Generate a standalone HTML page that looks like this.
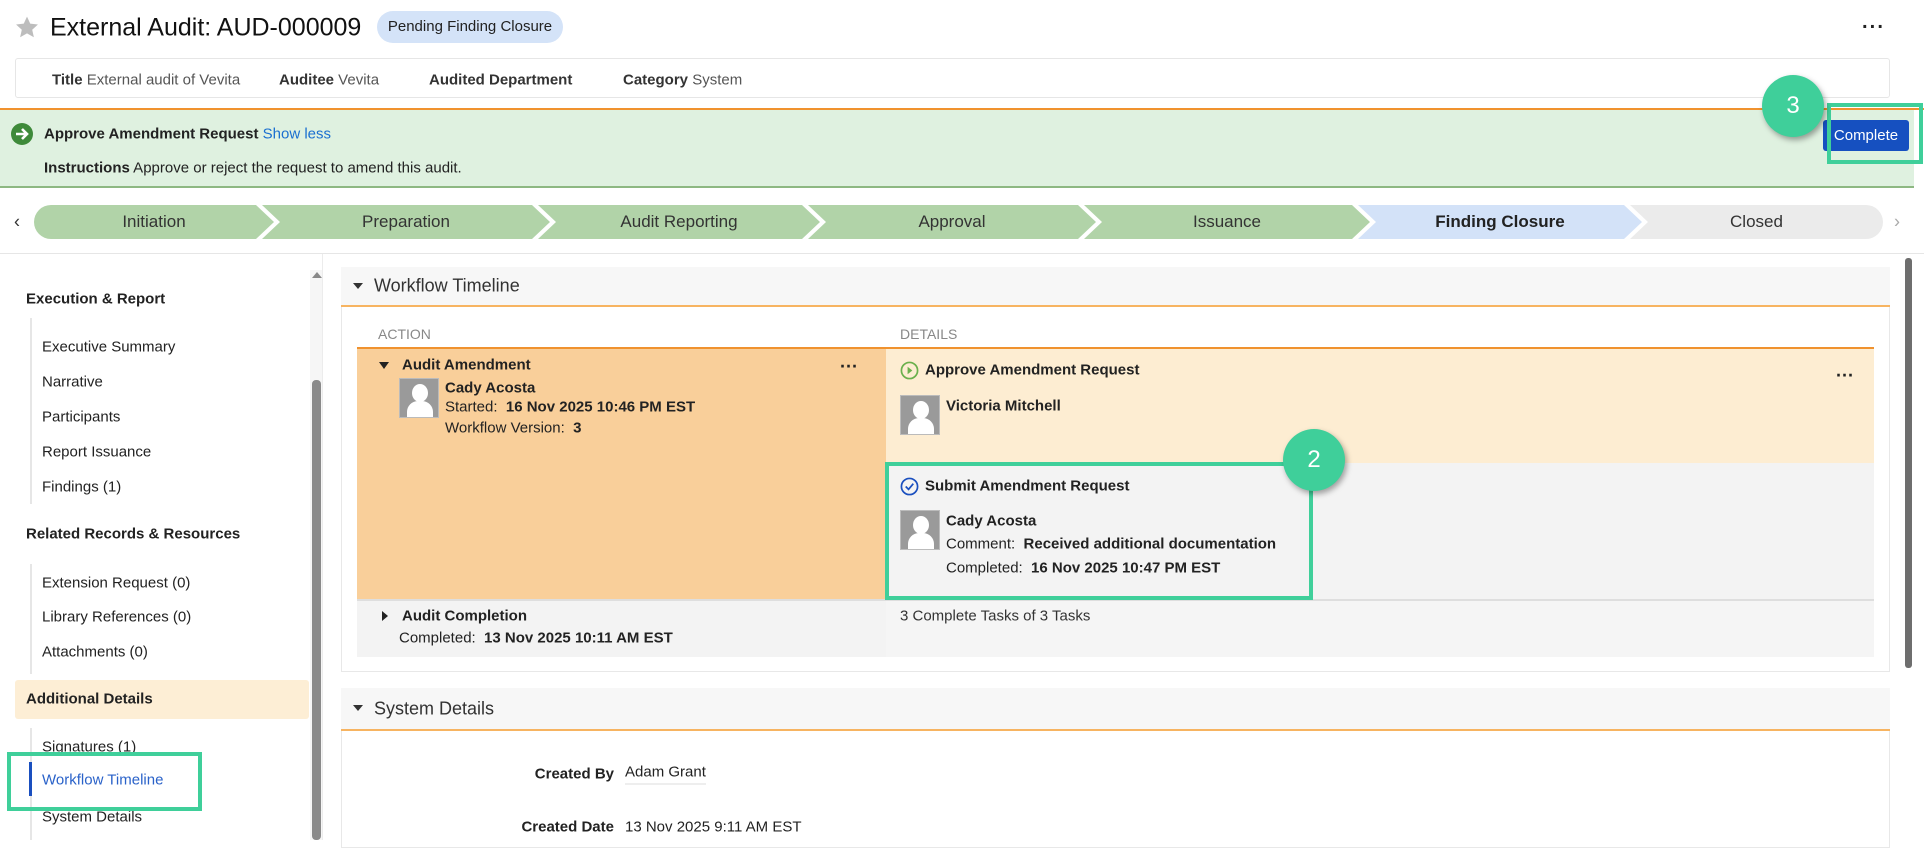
<!DOCTYPE html>
<html><head><meta charset="utf-8"><style>
*{margin:0;padding:0;box-sizing:border-box}
body{width:1924px;height:840px;overflow:hidden;background:#fff;font-family:"Liberation Sans",Arial,sans-serif;color:#222;position:relative;font-size:15px}
.a{position:absolute;white-space:nowrap}
.t{transform:translateY(-50%)}
b{font-weight:bold}
.step{position:absolute;top:205px;height:34px;display:flex;align-items:center;justify-content:center;font-size:17px;color:#333}
.av{position:absolute;width:40px;height:40px;background:#9a9a9a;border:1px solid #bbb;overflow:hidden}
.av:before{content:"";position:absolute;left:12px;top:5px;width:16px;height:18px;border-radius:50%;background:#fff}
.av:after{content:"";position:absolute;left:7px;top:22px;width:26px;height:22px;border-radius:11px 11px 0 0;background:#fff}
.hl{position:absolute;border:4px solid #3fcf9a}
.circ{position:absolute;width:62px;height:62px;border-radius:50%;background:#3fcf9a;color:#fff;font-size:24px;display:flex;align-items:center;justify-content:center;box-shadow:2px 3px 6px rgba(0,0,0,.35)}
.side{position:absolute;left:42px;font-size:15px;color:#222}
.sh{position:absolute;left:26px;font-size:15px;font-weight:bold}
</style></head><body>
<svg class="a" style="left:14px;top:15px" width="26" height="25" viewBox="0 0 24 24"><path d="M12 1.5l3.1 6.8 7.4.8-5.5 5 1.6 7.3L12 17.6l-6.6 3.8L7 14.1 1.5 9.1l7.4-.8z" fill="#bdbdbd"/></svg>
<div class="a t" style="left:50px;top:28px;font-size:25px;color:#111">External Audit: AUD-000009</div>
<div class="a" style="left:377px;top:11px;width:186px;height:32px;border-radius:16px;background:#d4e3f8;font-size:15px;line-height:32px;text-align:center;color:#222">Pending Finding Closure</div>
<div class="a t" style="left:1862px;top:28px;font-size:20px;font-weight:bold;letter-spacing:1px">···</div>
<div class="a" style="left:15px;top:58px;width:1875px;height:40px;border:1px solid #e6e6e6;border-radius:3px"></div>
<div class="a t" style="left:52px;top:80px;color:#555"><b style="color:#333">Title</b> External audit of Vevita</div>
<div class="a t" style="left:279px;top:80px;color:#555"><b style="color:#333">Auditee</b> Vevita</div>
<div class="a t" style="left:429px;top:80px"><b style="color:#333">Audited Department</b></div>
<div class="a t" style="left:623px;top:80px;color:#555"><b style="color:#333">Category</b> System</div>
<div class="a" style="left:0;top:108px;width:1924px;height:2px;background:#f0922e"></div>
<div class="a" style="left:0;top:110px;width:1914px;height:78px;background:#dff1e0;border-bottom:2px solid #8db882"></div>
<svg class="a" style="left:10px;top:122px" width="24" height="24" viewBox="0 0 24 24"><circle cx="12" cy="12" r="11" fill="#3e8a3a"/><path d="M6 12h10M12 7l5 5-5 5" stroke="#fff" stroke-width="2.6" fill="none"/></svg>
<div class="a t" style="left:44px;top:134px;font-size:15px"><b>Approve Amendment Request</b> <span style="color:#1a6fd0">Show less</span></div>
<div class="a t" style="left:44px;top:168px;font-size:15px"><b>Instructions</b> Approve or reject the request to amend this audit.</div>
<div class="a" style="left:1823px;top:120px;width:86px;height:31px;background:#1650c0;border-radius:3px;color:#fff;font-size:15px;line-height:31px;text-align:center">Complete</div>
<div class="hl" style="left:1827px;top:103px;width:96px;height:61px"></div>
<div class="circ" style="left:1762px;top:75px">3</div>
<div class="a t" style="left:14px;top:222px;font-size:18px;color:#333">‹</div>
<div class="a t" style="left:1894px;top:222px;font-size:18px;color:#aaa">›</div>
<div class="step" style="left:34px;width:240px;background:#b1d3a8;border-radius:17px 0 0 17px;clip-path:polygon(0 0,222px 0,100% 50%,222px 100%,0 100%)">Initiation</div>
<div class="step" style="left:262px;width:288px;background:#b1d3a8;clip-path:polygon(0 0,270px 0,100% 50%,270px 100%,0 100%,18px 50%)">Preparation</div>
<div class="step" style="left:538px;width:282px;background:#b1d3a8;clip-path:polygon(0 0,264px 0,100% 50%,264px 100%,0 100%,18px 50%)">Audit Reporting</div>
<div class="step" style="left:808px;width:288px;background:#b1d3a8;clip-path:polygon(0 0,270px 0,100% 50%,270px 100%,0 100%,18px 50%)">Approval</div>
<div class="step" style="left:1084px;width:286px;background:#b1d3a8;clip-path:polygon(0 0,268px 0,100% 50%,268px 100%,0 100%,18px 50%)">Issuance</div>
<div class="step" style="left:1358px;width:284px;background:#d3e2f8;font-weight:bold;color:#222;clip-path:polygon(0 0,266px 0,100% 50%,266px 100%,0 100%,18px 50%)">Finding Closure</div>
<div class="step" style="left:1630px;width:253px;background:#ebebeb;border-radius:0 17px 17px 0;clip-path:polygon(0 0,100% 0,100% 100%,0 100%,18px 50%)">Closed</div>
<div class="a" style="left:0;top:253px;width:1924px;height:1px;background:#e6e6e6"></div>
<div class="a" style="left:322px;top:254px;width:1px;height:586px;background:#ececec"></div>
<div class="a" style="left:310px;top:270px;width:12px;height:570px;background:#f6f6f6"></div>
<div class="a" style="left:312px;top:272px;width:0;height:0;border-left:5px solid transparent;border-right:5px solid transparent;border-bottom:6px solid #888"></div>
<div class="a" style="left:312px;top:380px;width:9px;height:460px;background:#8a8a8a;border-radius:4px"></div>
<div class="sh t" style="top:299px">Execution &amp; Report</div>
<div class="a" style="left:30px;top:318px;width:2px;height:186px;background:#e6e6e6"></div>
<div class="side t" style="top:347px">Executive Summary</div>
<div class="side t" style="top:382px">Narrative</div>
<div class="side t" style="top:417px">Participants</div>
<div class="side t" style="top:452px">Report Issuance</div>
<div class="side t" style="top:487px">Findings (1)</div>
<div class="sh t" style="top:534px">Related Records &amp; Resources</div>
<div class="a" style="left:30px;top:564px;width:2px;height:110px;background:#e6e6e6"></div>
<div class="side t" style="top:583px">Extension Request (0)</div>
<div class="side t" style="top:617px">Library References (0)</div>
<div class="side t" style="top:652px">Attachments (0)</div>
<div class="a" style="left:15px;top:680px;width:294px;height:39px;background:#fdeed5;border-radius:3px"></div>
<div class="sh t" style="top:699px">Additional Details</div>
<div class="a" style="left:30px;top:728px;width:2px;height:112px;background:#e6e6e6"></div>
<div class="side t" style="top:747px">Signatures (1)</div>
<div class="a" style="left:29px;top:762px;width:3px;height:34px;background:#1a4fbf"></div>
<div class="side t" style="top:780px;color:#2a62c9">Workflow Timeline</div>
<div class="side t" style="top:817px">System Details</div>
<div class="hl" style="left:7px;top:752px;width:195px;height:59px"></div>
<div class="a" style="left:1905px;top:258px;width:7px;height:410px;background:#6e6e6e;border-radius:3px"></div>
<div class="a" style="left:341px;top:267px;width:1549px;height:405px;border:1px solid #e8e8e8"></div>
<div class="a" style="left:341px;top:267px;width:1549px;height:39px;background:#f7f7f7"></div>
<div class="a" style="left:341px;top:305px;width:1549px;height:2px;background:#f7b461"></div>
<div class="a" style="left:353px;top:283px;border-left:5px solid transparent;border-right:5px solid transparent;border-top:6px solid #333"></div>
<div class="a t" style="left:374px;top:286px;font-size:18px;color:#333">Workflow Timeline</div>
<div class="a t" style="left:378px;top:334px;font-size:14px;color:#888">ACTION</div>
<div class="a t" style="left:900px;top:334px;font-size:14px;color:#888">DETAILS</div>
<div class="a" style="left:357px;top:347px;width:1517px;height:2px;background:#f0922e"></div>
<div class="a" style="left:357px;top:349px;width:529px;height:250px;background:#f9cf9a"></div>
<div class="a" style="left:886px;top:349px;width:988px;height:114px;background:#fdedd2"></div>
<div class="a" style="left:886px;top:463px;width:988px;height:136px;background:#f3f3f3"></div>
<div class="a" style="left:357px;top:599px;width:1517px;height:2px;background:#dedede"></div>
<div class="a" style="left:357px;top:601px;width:529px;height:56px;background:#f3f3f3"></div>
<div class="a" style="left:886px;top:601px;width:988px;height:56px;background:#f5f5f5"></div>
<div class="a" style="left:379px;top:362px;border-left:5px solid transparent;border-right:5px solid transparent;border-top:7px solid #222"></div>
<div class="a t" style="left:402px;top:365px;font-weight:bold">Audit Amendment</div>
<div class="a t" style="left:840px;top:367px;font-size:18px;font-weight:bold">···</div>
<div class="av" style="left:399px;top:378px"></div>
<div class="a t" style="left:445px;top:388px;font-weight:bold">Cady Acosta</div>
<div class="a t" style="left:445px;top:407px">Started:&nbsp; <b>16 Nov 2025 10:46 PM EST</b></div>
<div class="a t" style="left:445px;top:428px">Workflow Version:&nbsp; <b>3</b></div>
<svg class="a" style="left:900px;top:361px" width="19" height="19" viewBox="0 0 20 20"><circle cx="10" cy="10" r="8.5" fill="none" stroke="#6ab04c" stroke-width="1.8"/><path d="M8 6l5 4-5 4z" fill="#6ab04c"/></svg>
<div class="a t" style="left:925px;top:370px;font-weight:bold">Approve Amendment Request</div>
<div class="a t" style="left:1836px;top:376px;font-size:18px;font-weight:bold">···</div>
<div class="av" style="left:900px;top:395px"></div>
<div class="a t" style="left:946px;top:406px;font-weight:bold">Victoria Mitchell</div>
<svg class="a" style="left:900px;top:477px" width="19" height="19" viewBox="0 0 20 20"><circle cx="10" cy="10" r="8.5" fill="none" stroke="#1a4fbf" stroke-width="1.8"/><path d="M6 10l3 3 5-6" fill="none" stroke="#1a4fbf" stroke-width="1.8"/></svg>
<div class="a t" style="left:925px;top:486px;font-weight:bold">Submit Amendment Request</div>
<div class="av" style="left:900px;top:510px"></div>
<div class="a t" style="left:946px;top:521px;font-weight:bold">Cady Acosta</div>
<div class="a t" style="left:946px;top:544px">Comment:&nbsp; <b>Received additional documentation</b></div>
<div class="a t" style="left:946px;top:568px">Completed:&nbsp; <b>16 Nov 2025 10:47 PM EST</b></div>
<div class="hl" style="left:885px;top:462px;width:428px;height:138px"></div>
<div class="circ" style="left:1283px;top:429px">2</div>
<div class="a" style="left:382px;top:611px;border-top:5px solid transparent;border-bottom:5px solid transparent;border-left:6px solid #222"></div>
<div class="a t" style="left:402px;top:616px;font-weight:bold">Audit Completion</div>
<div class="a t" style="left:399px;top:638px">Completed:&nbsp; <b>13 Nov 2025 10:11 AM EST</b></div>
<div class="a t" style="left:900px;top:616px;color:#333">3 Complete Tasks of 3 Tasks</div>
<div class="a" style="left:341px;top:688px;width:1549px;height:160px;border:1px solid #e8e8e8"></div>
<div class="a" style="left:341px;top:688px;width:1549px;height:41px;background:#f7f7f7"></div>
<div class="a" style="left:341px;top:729px;width:1549px;height:2px;background:#f7b461"></div>
<div class="a" style="left:353px;top:705px;border-left:5px solid transparent;border-right:5px solid transparent;border-top:6px solid #333"></div>
<div class="a t" style="left:374px;top:709px;font-size:18px;color:#333">System Details</div>
<div class="a t" style="left:500px;width:114px;text-align:right;top:774px;font-weight:bold">Created By</div>
<div class="a t" style="left:625px;top:774px;border-bottom:1px solid #ddd;padding-bottom:3px">Adam Grant</div>
<div class="a t" style="left:480px;width:134px;text-align:right;top:827px;font-weight:bold">Created Date</div>
<div class="a t" style="left:625px;top:827px">13 Nov 2025 9:11 AM EST</div>
</body></html>
